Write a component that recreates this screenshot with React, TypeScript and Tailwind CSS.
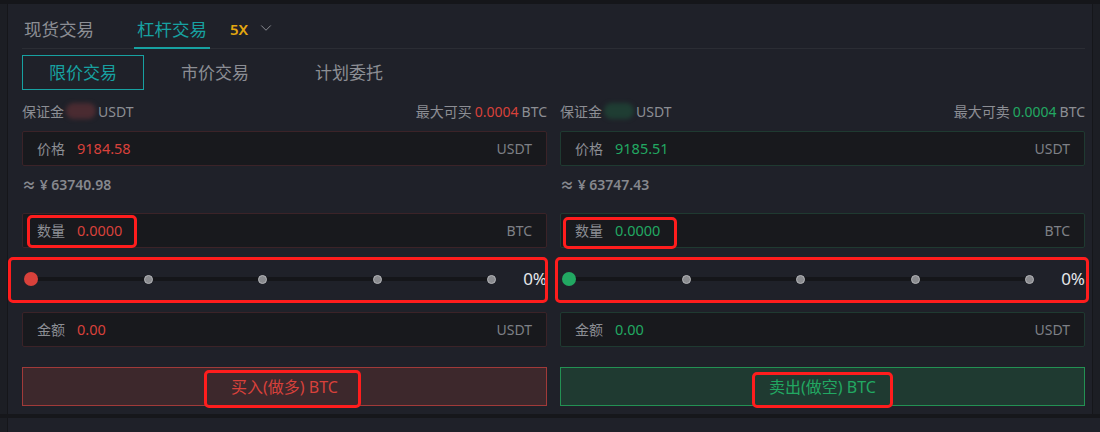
import { ChevronDown } from "lucide-react";

type Side = {
  maxLabel: string;
  price: string;
  approx: string;
  action: string;
  text: string;
  inputBorder: string;
  blob: string;
  dot: string;
  btn: string;
  qtyBox: string;
  sliderBox: string;
  btnBox: string;
};

const buy: Side = {
  maxLabel: "最大可买",
  price: "9184.58",
  approx: "≈ ¥ 63740.98",
  action: "买入(做多) BTC",
  text: "text-[#d8413b]",
  inputBorder: "border-[#3b2328]",
  blob: "bg-[#4a2b31]",
  dot: "bg-[#d8413b]",
  btn: "bg-[#3d282c] border-[#a13a39] text-[#d8413b]",
  qtyBox: "left-[4px] top-[1px] w-[110px] h-[33px]",
  sliderBox: "-left-[14px] -top-[2px] w-[540px] h-[46px]",
  btnBox: "left-[181px] top-[2px] w-[157px] h-[38px]",
};

const sell: Side = {
  maxLabel: "最大可卖",
  price: "9185.51",
  approx: "≈ ¥ 63747.43",
  action: "卖出(做空) BTC",
  text: "text-[#22a862]",
  inputBorder: "border-[#1f3a31]",
  blob: "bg-[#1f3d33]",
  dot: "bg-[#22a862]",
  btn: "bg-[#1f3a31] border-[#239153] text-[#22a862]",
  qtyBox: "left-[2px] top-[3px] w-[114px] h-[32px]",
  sliderBox: "-left-[5px] -top-[2px] w-[534px] h-[46px]",
  btnBox: "left-[191px] top-[4px] w-[141px] h-[36px]",
};

const mark = "absolute border-[3px] border-[#ff1d1d] rounded-[5px] pointer-events-none";

function Field({ s, label, value, unit, box }: { s: Side; label: string; value: string; unit: string; box?: string }) {
  return (
    <div className={`relative h-[35px] flex items-center px-[14px] bg-[#18191d] border ${s.inputBorder} rounded-[2px]`}>
      <span className="text-[14px] text-[#8c8e94] w-[40px]">{label}</span>
      <span className={`text-[14.5px] ${s.text}`}>{value}</span>
      <span className="ml-auto text-[14px] text-[#7e8086]">{unit}</span>
      {box && <div className={`${mark} ${box}`} />}
    </div>
  );
}

function Column({ s }: { s: Side }) {
  return (
    <div className="flex-1 flex flex-col">
      <div className="mt-[11px] h-[20px] flex items-center text-[14px] text-[#8c8e94]">
        <span>保证金</span>
        <span className={`w-[30px] h-[16px] rounded-full blur-[2px] ${s.blob} mx-[2px]`} />
        <span>USDT</span>
        <span className="ml-auto">{s.maxLabel}</span>
        <span className={`ml-[3px] ${s.text}`}>0.0004</span>
        <span className="ml-[3px]">BTC</span>
      </div>
      <div className="mt-[10px]">
        <Field s={s} label="价格" value={s.price} unit="USDT" />
      </div>
      <div className="mt-[8px] h-[20px] flex items-center text-[14px] font-semibold text-[#86888e]">{s.approx}</div>
      <div className="mt-[19px]">
        <Field s={s} label="数量" value="0.0000" unit="BTC" box={s.qtyBox} />
      </div>
      <div className="relative mt-[11px] h-[40px] flex items-center">
        <div className="relative w-[472px] ml-[2px] flex items-center justify-between">
          <div className="absolute left-[6px] right-[4px] h-[4px] bg-[#15161a] rounded" />
          <span className={`relative w-[14px] h-[14px] rounded-full ${s.dot}`} />
          {[0, 1, 2, 3].map((i) => (
            <span key={i} className="relative w-[9px] h-[9px] rounded-full bg-[#8a8b8f] border border-[#b4b5b8]" />
          ))}
        </div>
        <span className="ml-auto text-[17px] text-[#e6e7ea]">0%</span>
        <div className={`${mark} ${s.sliderBox}`} />
      </div>
      <div className="mt-[13px]">
        <Field s={s} label="金额" value="0.00" unit="USDT" />
      </div>
      <div className={`relative mt-[20px] h-[39px] flex items-center justify-center border text-[16px] ${s.btn}`}>
        {s.action}
        <div className={`${mark} ${s.btnBox}`} />
      </div>
    </div>
  );
}

export default function App() {
  return (
    <div className="w-[1100px] h-[432px] bg-[#1f2129] flex flex-col overflow-hidden font-['Noto_Sans','Noto_Sans_CJK_SC',sans-serif]">
      <div className="h-[4px] bg-[#15161a]" />
      <div className="flex h-[410px]">
        <div className="w-[8px] border-r border-[#15161a] bg-[#1c1e24]" />
        <div className="flex-1 pl-[14px] pr-[7px] flex flex-col">
          <div className="h-[45px] flex items-end border-b border-[#2b2d34]">
            <div className="h-[44px] pt-[6px] flex items-center ml-[2px] text-[17.5px] text-[#8c8e94]">现货交易</div>
            <div className="h-[44px] pt-[6px] ml-[40px] px-[3px] flex items-center text-[17.5px] text-[#17a1a1] border-b-2 border-[#17a1a1] -mb-[1px]">
              杠杆交易
            </div>
            <div className="h-[44px] pt-[6px] ml-[20px] flex items-center text-[15px] font-semibold text-[#e3a710]">5X</div>
            <div className="h-[44px] pt-[4px] ml-[9px] flex items-center text-[#8c8e94]">
              <ChevronDown size={18} strokeWidth={1.3} />
            </div>
          </div>
          <div className="mt-[6px] h-[35px] flex items-center text-[17px]">
            <div className="w-[122px] h-[35px] flex items-center justify-center border border-[#17a1a1] text-[#17a1a1]">限价交易</div>
            <div className="w-[142px] text-center text-[#8c8e94]">市价交易</div>
            <div className="w-[126px] text-center text-[#8c8e94]">计划委托</div>
          </div>
          <div className="flex gap-[13px]">
            <Column s={buy} />
            <Column s={sell} />
          </div>
        </div>
        <div className="w-[8px] border-l border-[#15161a] bg-[#1c1e24]" />
      </div>
      <div className="h-[4px] bg-[#16171b]" />
      <div className="flex-1 flex">
        <div className="w-[8px] border-r border-[#15161a] bg-[#1c1e24]" />
      </div>
    </div>
  );
}
